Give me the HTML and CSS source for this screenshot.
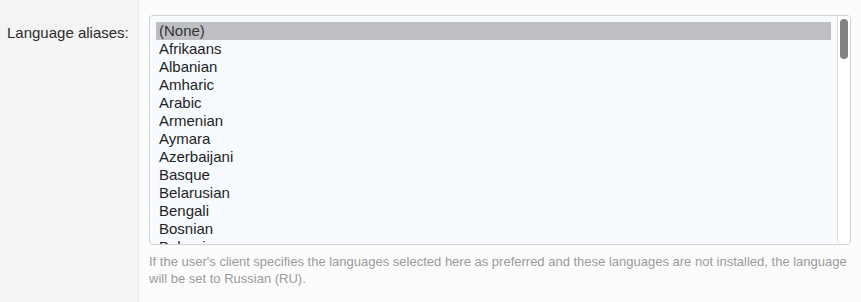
FILE: index.html
```html
<!DOCTYPE html>
<html>
<head>
<meta charset="utf-8">
<link rel="stylesheet" href="styles.css">
</head>
<body>
<div class="field">
  <div class="label-col"><label class="label">Language aliases:</label></div>
  <div class="control-col">
    <div class="listbox">
      <div class="options">
        <div class="opt selected">(None)</div>
        <div class="opt">Afrikaans</div>
        <div class="opt">Albanian</div>
        <div class="opt">Amharic</div>
        <div class="opt">Arabic</div>
        <div class="opt">Armenian</div>
        <div class="opt">Aymara</div>
        <div class="opt">Azerbaijani</div>
        <div class="opt">Basque</div>
        <div class="opt">Belarusian</div>
        <div class="opt">Bengali</div>
        <div class="opt">Bosnian</div>
        <div class="opt">Bulgarian</div>
        <div class="opt">Catalan</div>
        <div class="opt">Chinese</div>
      </div>
      <div class="scrollbar"><div class="thumb"></div></div>
    </div>
    <p class="help">If the user's client specifies the languages selected here as preferred and these languages are not installed, the language will be set to Russian (RU).</p>
  </div>
</div>
</body>
</html>
```
FILE: styles.css
```css
html, body {
  margin: 0;
  padding: 0;
  height: 100%;
}
body {
  font-family: "Liberation Sans", Arial, sans-serif;
  background: #fcfcfc;
}
.field {
  display: flex;
  height: 302px;
}
.label-col {
  width: 139px;
  background: #f4f4f4;
  border-right: 1px solid #e8e8e8;
  padding: 24px 0 0 7px;
  box-sizing: border-box;
}
.label {
  font-size: 15px;
  color: #2b2b2b;
  line-height: 17px;
}
.control-col {
  flex: 1;
  padding: 15px 10px 0 10px;
}
.listbox {
  display: flex;
  width: 702px;
  height: 230px;
  box-sizing: border-box;
  border: 1px solid #d3d3d3;
  border-radius: 4px;
  background: #f7fbff;
  overflow: hidden;
}
.options {
  flex: 1;
  padding: 6px 6px 0 6px;
  overflow: hidden;
}
.opt {
  font-size: 15px;
  line-height: 18px;
  height: 18px;
  padding-left: 3px;
  color: #1e1e1e;
  white-space: nowrap;
}
.opt.selected {
  background: #bebfc3;
  color: #333;
}
.scrollbar {
  width: 13px;
  border-left: 1px solid #dadada;
  border-radius: 0 0 0 5px;
  background: #ffffff;
  padding: 3px 0 0 2px;
  box-sizing: border-box;
}
.thumb {
  width: 8px;
  height: 40px;
  border-radius: 4px;
  background: #828282;
}
.help {
  margin: 8px 0 0 0;
  font-size: 13px;
  line-height: 17px;
  color: #9a9a9a;
}
```
